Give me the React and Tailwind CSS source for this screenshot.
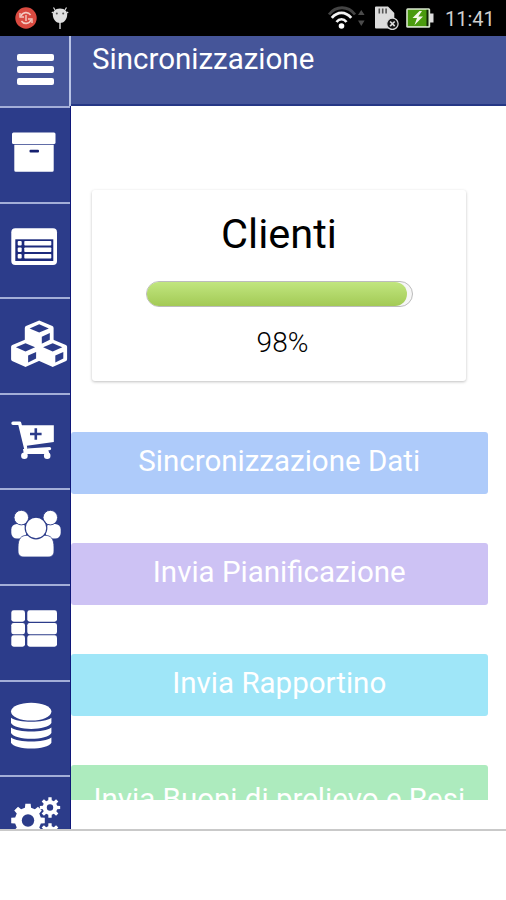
import React from "react";

// Outline of a toothed wheel centred on (cx, cy).
function gearPath(cx, cy, outer, inner, teeth) {
  const step = (Math.PI * 2) / teeth;
  const points = [];
  for (let i = 0; i < teeth; i++) {
    const a = i * step - Math.PI / 2;
    [
      [inner, -0.3],
      [outer, -0.2],
      [outer, 0.2],
      [inner, 0.3],
    ].forEach(([r, t]) => {
      points.push(`${(cx + r * Math.cos(a + t * step)).toFixed(2)} ${(cy + r * Math.sin(a + t * step)).toFixed(2)}`);
    });
  }
  return `M${points.join("L")}Z`;
}

const NAVY = "#2c3c8a";

function Archive() {
  return (
    <>
      <rect x="12" y="24.5" width="43.5" height="11.5" rx="1.5" />
      <path d="M14.3 36.8H53.7V62.3a1.5 1.5 0 0 1-1.5 1.5H15.8a1.5 1.5 0 0 1-1.5-1.5Z" />
      <rect x="29.5" y="41.7" width="9.5" height="2.8" rx="1" fill="#15206f" />
    </>
  );
}

function ListCard() {
  return (
    <>
      <rect x="11.3" y="24.3" width="45.7" height="36.7" rx="4" />
      <rect x="15.3" y="35.3" width="38" height="21.7" fill="#1d2b7d" />
      {[37, 43.5, 50].map((y) => (
        <g key={y}>
          <rect x="17.7" y={y} width="4" height="4.6" rx="1" />
          <rect x="24.3" y={y} width="27" height="4.6" rx="0.8" />
        </g>
      ))}
    </>
  );
}

function Cube({ x, y }) {
  return (
    <g transform={`translate(${x} ${y})`}>
      <path d="M0 -13.6L13.2 -8a2 2 0 0 1 1.2 1.8V6.2a2 2 0 0 1-1 1.7L1 13.6a2 2 0 0 1-2 0L-13.4 7.9a2 2 0 0 1-1-1.7V-6.2a2 2 0 0 1 1.2-1.8Z" />
      <path d="M0 -9.8L9.6 -5.7L0 -1.5L-9.6 -5.7Z" fill={NAVY} />
      <path d="M2.6 2.6L10.6 -1V5.6L2.6 9.6Z" fill={NAVY} />
    </g>
  );
}

function Cubes() {
  return (
    <>
      <Cube x={39.2} y={35.1} />
      <Cube x={25.5} y={54} />
      <Cube x={52.7} y={54} />
    </>
  );
}

function Cart() {
  return (
    <>
      <path d="M13 28.2H19.6L25.8 53.6H49.5" fill="none" stroke="white" strokeWidth="3.4" strokeLinecap="round" strokeLinejoin="round" />
      <path d="M20.2 30.3H53.8V47L25 51Z" />
      <path d="M23 54L23.8 59H49.5L48 54Z" />
      <circle cx="24.4" cy="60.8" r="3.3" />
      <circle cx="47.2" cy="60.8" r="3.3" />
      <path d="M35.8 33.2V44.8M30 39H41.6" stroke={NAVY} strokeWidth="2.6" />
      <path d="M27 52.9L50 51.5" stroke={NAVY} strokeWidth="1.2" />
    </>
  );
}

function Users() {
  return (
    <>
      <rect x="11.3" y="34" width="15" height="14.6" rx="5.5" />
      <rect x="45.7" y="34" width="15" height="14.6" rx="5.5" />
      <circle cx="21.3" cy="27.6" r="7.3" stroke={NAVY} strokeWidth="0.9" />
      <circle cx="50.3" cy="27.6" r="7.3" stroke={NAVY} strokeWidth="0.9" />
      <path d="M18 57C18 49 21 45.3 27 45.3H45C51 45.3 54 49 54 57V61C54 65 51.5 67 48 67H24C20.5 67 18 65 18 61Z" stroke={NAVY} strokeWidth="0.8" />
      <circle cx="36" cy="38" r="10.8" stroke={NAVY} strokeWidth="1.2" />
    </>
  );
}

function Rows() {
  return [24.3, 36.9, 49.3].map((y) => (
    <g key={y}>
      <rect x="11.3" y={y} width="13.7" height="11.4" rx="2.4" />
      <rect x="27.3" y={y} width="29.7" height="11.4" rx="2.4" />
    </g>
  ));
}

function Database() {
  return (
    <>
      <ellipse cx="31.2" cy="29.6" rx="20.2" ry="8.9" />
      {[35.8, 45.6, 55.4].map((y) => (
        <path key={y} d={`M11 ${y}C18 ${y + 5.3} 44.4 ${y + 5.3} 51.4 ${y}V${y + 5.3}C48 ${y + 13} 14.4 ${y + 13} 11 ${y + 5.3}Z`} />
      ))}
    </>
  );
}

function Gears() {
  return (
    <>
      <path d={gearPath(28, 43.5, 17, 13.2, 8)} />
      <circle cx="28" cy="43.5" r="6.2" fill={NAVY} />
      <path d={gearPath(50, 30.5, 10.3, 7.4, 8)} />
      <circle cx="50" cy="30.5" r="3.2" fill={NAVY} />
      <path d={gearPath(50, 56.5, 10.3, 7.4, 8)} />
      <circle cx="50" cy="56.5" r="3.2" fill={NAVY} />
    </>
  );
}

const MENU = [Archive, ListCard, Cubes, Cart, Users, Rows, Database, Gears];

function StatusBar() {
  return (
    <div className="flex h-9 shrink-0 items-center bg-black pr-[11px] pl-[15px] text-[#cfcfcf]">
      <svg className="h-[22px] w-[22px]" viewBox="0 0 22 22" fill="none">
        <circle cx="11" cy="11" r="10.7" fill="#d94a40" />
        <path d="M6 9A5.5 5.5 0 0 1 15.6 8M16 13A5.5 5.5 0 0 1 6.4 14" stroke="#f3c9c0" strokeWidth="1.6" />
        <path d="M5 6V10H9M17 16V12H13" stroke="#f3c9c0" strokeWidth="1.4" />
        <path d="M11 8V14" stroke="#f3c9c0" strokeWidth="1.4" />
      </svg>
      <svg className="ml-[14px] h-6 w-[18px]" viewBox="0 0 18 24">
        <path d="M4 4L2.5 1.5M14 4L15.5 1.5M2 6L0.8 7M16 6L17.2 7" stroke="#ddd" strokeWidth="1.2" />
        <path d="M9 2.5C14 2.5 16.5 5.5 16.2 9C15.8 13.5 13 17 9 17C5 17 2.2 13.5 1.8 9C1.5 5.5 4 2.5 9 2.5Z" fill="#dedede" />
        <path d="M8.3 16H9.7V23H8.3Z" fill="#ddd" />
        <circle cx="5.8" cy="7.4" r="1" fill="#555" />
        <circle cx="12.2" cy="7.4" r="1" fill="#555" />
      </svg>
      <div className="ml-auto flex items-center">
        <svg className="h-6 w-9 overflow-visible" viewBox="0 0 36 24" fill="none">
          <path d="M0 8.5C7 -0.5 19 -0.5 26 8.5" stroke="#444" strokeWidth="2.8" />
          <path d="M2.8 11.9C8.5 5.2 16.5 5.2 22.2 11.9" stroke="#f4f4f4" strokeWidth="2.8" />
          <path d="M7.5 16C10.5 12.3 14.5 12.3 17.5 16" stroke="#f4f4f4" strokeWidth="2.7" />
          <circle cx="12.5" cy="20" r="2.8" fill="white" />
          <path d="M29 9L32.3 4L35.6 9ZM29 14.5H35.6L32.3 20Z" fill="#4b4b4b" />
        </svg>
        <svg className="ml-[10px] h-6 w-6" viewBox="0 0 24 24">
          <path d="M1 0.5H13L19.3 7V22.5H1A1 1 0 0 1 0 21.5V1.5A1 1 0 0 1 1 0.5Z" fill="#dcdcdc" />
          <path d="M4.3 2.5V7.5M7.7 2.5V7.5M11.1 2.5V7.5" stroke="#555" strokeWidth="1.6" />
          <circle cx="17.4" cy="17.8" r="5.7" fill="#111" stroke="#d8d8d8" strokeWidth="1.3" />
          <path d="M15.1 15.5L19.7 20.1M19.7 15.5L15.1 20.1" stroke="#ddd" strokeWidth="1.7" />
        </svg>
        <svg className="ml-[7px] h-5 w-7" viewBox="0 0 28 20">
          <rect x="0.2" y="0.2" width="24" height="19.5" rx="1.5" fill="#d8e5ce" />
          <rect x="1.8" y="1.8" width="20" height="16.3" fill="#4a9b0e" />
          <rect x="20.5" y="1.8" width="2" height="16.3" fill="#102806" />
          <path d="M24 5.5H27.5V14.5H24Z" fill="#ddd" />
          <path d="M13.5 3L6.5 10H11L8.5 17L17 8.5H12.3L16 3Z" fill="#f4f7e9" />
        </svg>
        <span className="ml-[11px] w-[50px] pt-[2px] text-[20px] leading-[34px] whitespace-nowrap">11:41</span>
      </div>
    </div>
  );
}

function Action({ label, className }) {
  return (
    <button className={`block h-[62px] w-[416.5px] shrink-0 rounded-[3px] pb-[3px] text-center text-[29.5px] leading-[59px] whitespace-nowrap text-white ${className}`}>
      {label}
    </button>
  );
}

export default function App() {
  return (
    <div className="flex h-[900px] w-[506px] flex-col overflow-hidden bg-white font-[Roboto,sans-serif]">
      <StatusBar />
      <header className="flex h-[70px] shrink-0 bg-[#455599] text-white">
        <div className="w-[71px] shrink-0 border-r-2 border-[#b9c4e6] pt-[18px] pl-[17px]">
          <div className="flex flex-col gap-[5px]">
            <div className="h-[7px] w-[37px] rounded-[2px] bg-white" />
            <div className="h-[7px] w-[37px] rounded-[2px] bg-white" />
            <div className="h-[7px] w-[37px] rounded-[2px] bg-white" />
          </div>
        </div>
        <h1 className="flex-1 border-b-2 border-[#253785] pl-[21px] text-[29.5px] leading-[47px] whitespace-nowrap">Sincronizzazione</h1>
      </header>
      <div className="flex h-[725px] shrink-0 overflow-hidden border-b-2 border-[#c9c9c9]">
        <nav className="w-[71px] shrink-0 overflow-hidden border-r border-[#10187a] bg-[#2c3c8a]">
          {MENU.map((Icon, i) => (
            <div key={i} className="h-[95.6px] border-t-2 border-[#a3aed8] text-white">
              <svg className="block h-[93px] w-[70px]" viewBox="0 0 70 93" fill="currentColor">
                <Icon />
              </svg>
            </div>
          ))}
        </nav>
        <main className="flex h-[694px] flex-1 flex-col overflow-hidden">
          <section className="mt-[84px] ml-[21px] flex h-[191px] w-[374px] shrink-0 flex-col items-center rounded-[3px] bg-white shadow-[0_1px_3px_rgba(0,0,0,0.25)]">
            <h2 className="mt-[19px] text-[41.5px] leading-[50px]">Clienti</h2>
            <div className="mt-[22px] h-[26px] w-[267px] rounded-full border border-[#bcbcbc] bg-[#f6f6f6]">
              <div className="h-6 w-[260px] rounded-full bg-linear-to-b from-[#c1e67f] to-[#a3ca55]" />
            </div>
            <p className="mt-[19px] ml-[7px] text-[28px] leading-[34px] font-light text-black">98%</p>
          </section>
          <div className="mt-[51px] flex flex-col gap-[49px]">
            <Action label="Sincronizzazione Dati" className="bg-[#aecbfa]" />
            <Action label="Invia Pianificazione" className="bg-[#cdc2f4]" />
            <Action label="Invia Rapportino" className="bg-[#9fe6f8]" />
            <Action label="Invia Buoni di prelievo e Resi" className="bg-[#adebbe] pt-[5px]" />
          </div>
        </main>
      </div>
    </div>
  );
}
